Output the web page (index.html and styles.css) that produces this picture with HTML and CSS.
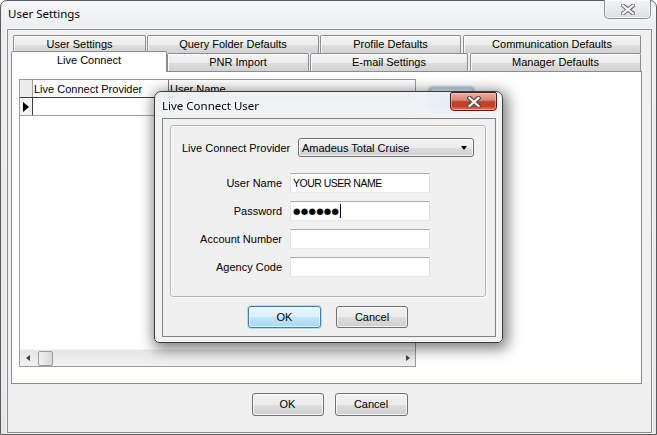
FILE: index.html
```html
<!DOCTYPE html>
<html>
<head>
<meta charset="utf-8">
<link rel="stylesheet" href="styles.css">
</head>
<body>
<div class="window">
  <div class="titlebar">
    <span class="title">User Settings</span>
    <div class="wclose">
      <svg width="14" height="11" viewBox="0 0 14 11"><path d="M2 1.5 L12 9.5 M12 1.5 L2 9.5" stroke="#6b6b6b" stroke-width="4.2" stroke-linecap="square"/><path d="M2 1.5 L12 9.5 M12 1.5 L2 9.5" stroke="#f4f4f4" stroke-width="2.2" stroke-linecap="square"/></svg>
    </div>
  </div>
  <div class="client">
    <div class="tabs">
      <div class="tabrow r1">
        <div class="tab t-us">User Settings</div>
        <div class="tab t-qf">Query Folder Defaults</div>
        <div class="tab t-pd">Profile Defaults</div>
        <div class="tab t-cd">Communication Defaults</div>
      </div>
      <div class="tabrow r2">
        <div class="tab sel t-lc">Live Connect</div>
        <div class="tab t-pnr">PNR Import</div>
        <div class="tab t-em">E-mail Settings</div>
        <div class="tab t-md">Manager Defaults</div>
      </div>
    </div>
    <div class="panel">
      <div class="grid">
        <div class="ghead">
          <div class="corner"></div>
          <div class="hcell c1">Live Connect Provider</div>
          <div class="hcell c2">User Name</div>
        </div>
        <div class="grow">
          <div class="ind"><span class="tri"></span></div>
          <div class="cell c1"></div>
          <div class="cell c2"></div>
        </div>
        <div class="gbody"></div>
        <div class="hscroll">
          <span class="arrow left"></span>
          <span class="thumb"></span>
          <span class="track"></span>
          <span class="arrow right"></span>
        </div>
      </div>
      <div class="addbtn"></div>
    </div>
    <div class="footer">
      <div class="btn">OK</div>
      <div class="btn">Cancel</div>
    </div>
  </div>
</div>

<div class="dialog">
  <div class="dtitlebar">
    <span class="dtitle">Live Connect User</span>
    <div class="dclose">
      <svg width="14" height="12" viewBox="0 0 14 12"><path d="M2.5 2 L11.5 10 M11.5 2 L2.5 10" stroke="#4a4a4a" stroke-width="4.4" stroke-linecap="square"/><path d="M2.5 2 L11.5 10 M11.5 2 L2.5 10" stroke="#ffffff" stroke-width="2.3" stroke-linecap="square"/></svg>
    </div>
  </div>
  <div class="dclient">
    <div class="group">
      <div class="prow">
        <span class="plabel">Live Connect Provider</span>
        <div class="combo"><span>Amadeus Total Cruise</span><span class="carrow"></span></div>
      </div>
      <div class="fields">
        <span class="flabel">User Name</span>
        <div class="tbox"><span class="tval">YOUR USER NAME</span></div>
        <span class="flabel">Password</span>
        <div class="tbox"><span class="dots">●●●●●●</span><span class="caret"></span></div>
        <span class="flabel">Account Number</span>
        <div class="tbox"></div>
        <span class="flabel">Agency Code</span>
        <div class="tbox"></div>
      </div>
    </div>
    <div class="dfooter">
      <div class="btn primary">OK</div>
      <div class="btn">Cancel</div>
    </div>
  </div>
</div>
</body>
</html>
```
FILE: styles.css
```css
* { box-sizing: border-box; }
html, body { margin: 0; padding: 0; }
body {
  width: 657px; height: 435px; overflow: hidden; position: relative;
  background: #ffffff;
  font-family: "Liberation Sans", Arial, sans-serif;
  font-size: 11px; color: #000;
}
.window {
  width: 657px; height: 435px;
  border: 1px solid #5b5b5b;
  border-radius: 7px 7px 0 0;
  background: linear-gradient(180deg, #f6f7f9 0px, #eceff2 28px, #e4e8ec 100%);
  padding: 0 4px 1px 6px;
  display: flex; flex-direction: column;
}
.titlebar {
  height: 28px; flex: none;
  display: flex; justify-content: space-between; align-items: flex-start;
}
.title {
  font-family: "Noto Sans", "Open Sans", sans-serif;
  font-size: 11.5px; padding-left: 1px; margin-top: 5px; color: #000;
}
.wclose {
  width: 47px; height: 19px; margin-top: -1px; margin-right: 1px;
  border: 1px solid #8c8c8c; border-top: none;
  border-radius: 0 0 5px 5px;
  background: linear-gradient(180deg, #f3f4f6 0%, #e7e9ec 50%, #dcdfe3 100%);
  box-shadow: inset 0 0 0 1px rgba(255,255,255,0.7);
  display: flex; align-items: center; justify-content: center;
}
.client {
  flex: 1;
  border: 1px solid #8a8b8c;
  box-shadow: 0 0 0 1px rgba(255,255,255,0.6);
  background: #f0f0f0;
  display: flex; flex-direction: column;
}
.tabs { padding-top: 5px; }
.tabrow { display: flex; height: 18px; }
.r1 { margin-left: 5px; }
.r2 { margin-left: 3px; align-items: flex-end; }
.tab {
  height: 18px;
  border: 1px solid #898c95; border-bottom: none;
  border-radius: 2px 2px 0 0;
  background: linear-gradient(180deg, #f4f4f4 0%, #ececec 50%, #dedede 51%, #d2d2d2 100%);
  box-shadow: inset 1px 1px 0 #fbfbfb;
  text-align: center; line-height: 16px;
}
.t-us { width: 133px; }
.t-qf { width: 172px; margin-left: 1px; }
.t-pd { width: 141px; margin-left: 1px; }
.t-cd { width: 178px; margin-left: 2px; }
.t-lc { width: 156px; }
.t-pnr { width: 142px; }
.t-em { width: 158px; margin-left: 1px; }
.t-md { width: 171px; margin-left: 2px; }
.r2 .tab { line-height: 17px; }
.tab.sel {
  height: 21px; position: relative; top: 1px; z-index: 2;
  background: #ffffff; box-shadow: none;
  line-height: 17px;
}
.panel {
  margin-left: 3px; width: 631px; height: 313px;
  border: 1px solid #898c95; background: #ffffff;
  display: flex; align-items: flex-start;
  padding: 7px 0 0 7px;
}
.grid {
  width: 397px; height: 288px;
  border: 1px solid #9c9c9c;
  display: flex; flex-direction: column;
  background: #fff;
}
.ghead { display: flex; height: 18px; flex: none; border-bottom: 1px solid #3d3d3d; }
.corner { width: 13px; background: #ececec; border-right: 1px solid #a0a0a0; }
.hcell { padding: 2px 0 0 1px; line-height: 14px; white-space: nowrap; overflow: hidden; }
.c1 { width: 136px; border-right: 1px solid #7a7a7a; }
.c2 { flex: 1; }
.grow { display: flex; height: 18px; flex: none; border-bottom: 1px solid #a0a0a0; }
.ind { width: 13px; background: #f4f4f4; border-right: 1px solid #3d3d3d; display: flex; align-items: center; padding-left: 3px; }
.tri { width: 0; height: 0; border-left: 6px solid #000; border-top: 5px solid transparent; border-bottom: 5px solid transparent; }
.grow .c1 { border-right: 1px solid #a0a0a0; }
.gbody { flex: 1; }
.hscroll {
  height: 17px; flex: none;
  background: linear-gradient(180deg, #e6e6e6, #f1f1f1);
  border-top: 1px solid #f4f4f4;
  display: flex; align-items: center; padding: 0 5px 0 6px;
}
.arrow { width: 0; height: 0; border-top: 3.5px solid transparent; border-bottom: 3.5px solid transparent; }
.arrow.left { border-right: 4px solid #404040; }
.arrow.right { border-left: 4px solid #404040; }
.thumb {
  width: 15px; height: 15px; margin-left: 8px;
  border: 1px solid #9a9a9a; border-radius: 2px;
  background: linear-gradient(90deg, #f2f2f2, #dadada);
}
.track { flex: 1; }
.addbtn {
  width: 45px; height: 23px; margin: 8px 0 0 13px;
  border: 1px solid #3c7fb1; border-radius: 3px;
  background: linear-gradient(180deg, #e5f4fc 0%, #c4e5f6 50%, #98d1ef 51%, #b2ddf3 100%);
  filter: blur(1px);
}
.footer { display: flex; justify-content: center; gap: 11px; margin-top: 9px; }
.btn {
  width: 72px; height: 23px;
  border: 1px solid #707070; border-radius: 3px;
  background: linear-gradient(180deg, #f2f2f2 0%, #ebebeb 50%, #dddddd 51%, #cfcfcf 100%);
  box-shadow: inset 0 0 0 1px rgba(255,255,255,0.75);
  text-align: center; line-height: 21px;
}
.footer .btn + .btn { width: 73px; }

.dialog {
  position: absolute; left: 154px; top: 91px;
  width: 349px; height: 252px;
  border: 1px solid #3e3e3e; border-radius: 7px 7px 5px 5px;
  background: rgba(238, 241, 245, 0.88);
  backdrop-filter: blur(5px);
  box-shadow: 2px 3px 14px 3px rgba(0,0,0,0.5);
  padding: 0 6px 5px 7px;
  display: flex; flex-direction: column;
  z-index: 10;
}
.dtitlebar { height: 26px; flex: none; display: flex; justify-content: space-between; align-items: flex-start; }
.dtitle { font-family: "Noto Sans", "Open Sans", sans-serif; font-size: 11.5px; margin-top: 6px; }
.dclose {
  width: 47px; height: 19px; margin-right: -1px;
  border: 1px solid #5e1a12; border-radius: 2px 2px 4px 4px;
  background: linear-gradient(180deg, #eab1a4 0%, #dc8472 42%, #c2412b 52%, #c43f27 78%, #e0836a 100%);
  box-shadow: inset 0 0 0 1px rgba(255,210,200,0.5);
  display: flex; align-items: center; justify-content: center;
}
.dclient {
  flex: 1;
  border: 1px solid #828282;
  background: #f0f0f0;
  padding: 6px 0 0 7px;
}
.group {
  width: 316px; height: 172px;
  border: 1px solid #b4b4b4; border-radius: 3px;
  box-shadow: inset 1px 1px 0 #fff, 1px 1px 0 #fff;
  padding-left: 11px;
}
.prow { display: flex; align-items: center; height: 19px; margin-top: 12px; }
.plabel { width: 116px; white-space: nowrap; }
.combo {
  width: 176px; height: 19px;
  border: 1px solid #707070; border-radius: 3px;
  background: linear-gradient(180deg, #f2f2f2 0%, #ebebeb 50%, #dddddd 51%, #cfcfcf 100%);
  box-shadow: inset 0 0 0 1px rgba(255,255,255,0.7);
  display: flex; align-items: center; justify-content: space-between;
  padding: 0 6px 0 3px;
}
.carrow { width: 0; height: 0; border-left: 3.5px solid transparent; border-right: 3.5px solid transparent; border-top: 4px solid #000; }
.fields {
  display: grid; grid-template-columns: 100px 140px;
  column-gap: 8px; row-gap: 8px; margin-top: 16px;
}
.flabel { text-align: right; align-self: center; white-space: nowrap; }
.tbox {
  height: 20px;
  border: 1px solid; border-color: #abadb3 #dbdfe6 #e3e9ef #e2e3ea;
  background: #fff;
  display: flex; align-items: center; padding-left: 2px;
}
.tval { font-size: 10.5px; letter-spacing: -0.5px; }
.dots { font-family: "DejaVu Sans", sans-serif; font-size: 8.5px; letter-spacing: 0.3px; line-height: 12px; }
.caret { width: 1px; height: 14px; background: #000; margin-left: 1px; }
.dfooter { width: 316px; display: flex; justify-content: center; gap: 15px; margin-top: 9px; }
.dfooter .btn { height: 22px; line-height: 20px; }
.dfooter .btn.primary {
  width: 73px;
  border-color: #3c7fb1;
  background: linear-gradient(180deg, #eaf6fd 0%, #d9f0fc 50%, #bee6fd 51%, #a7d9f5 100%);
  box-shadow: inset 0 0 0 1px rgba(255,255,255,0.7), 0 0 0 1px rgba(70,170,230,0.35);
}
```
